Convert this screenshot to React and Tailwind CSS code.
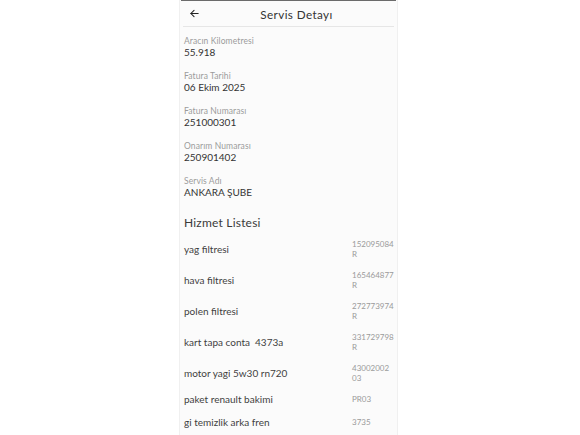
import React from "react";

const fields = [
  ["Aracın Kilometresi", "55.918"],
  ["Fatura Tarihi", "06 Ekim 2025"],
  ["Fatura Numarası", "251000301"],
  ["Onarım Numarası", "250901402"],
  ["Servis Adı", "ANKARA ŞUBE"],
];

const items = [
  ["yag filtresi", ["152095084", "R"], "h-[31px]"],
  ["hava filtresi", ["165464877", "R"], "h-[31px]"],
  ["polen filtresi", ["272773974", "R"], "h-[31px]"],
  ["kart tapa conta  4373a", ["331729798", "R"], "h-[31px]"],
  ["motor yagi 5w30 rn720", ["43002002", "03"], "h-[31px]"],
  ["paket renault bakimi", ["PR03"], "h-[22px]"],
  ["gi temizlik arka fren", ["3735"], "h-[24px]"],
];

export default function App() {
  return (
    <div className="w-[580px] h-[435px] bg-white overflow-hidden" style={{ fontFamily: "Lato, 'Open Sans', sans-serif" }}>
      <div className="ml-[179px] w-[219px] h-[435px] bg-[#fbfbfb] border-x border-[#f0f0f0] flex flex-col">
        <div className="h-[1px] mx-[1px] bg-[#6b6b6b]" />
        <div className="h-[25px] relative flex items-center justify-center pl-[16px]">
          <svg className="absolute left-[9px] top-[7px]" width="11" height="11" viewBox="0 0 24 24" fill="none" stroke="#222" strokeWidth="2.3" strokeLinecap="round" strokeLinejoin="round">
            <path d="M20 12H4" />
            <path d="M11 19l-7-7 7-7" />
          </svg>
          <span className="text-[11.7px] text-[#333] tracking-[0.4px] leading-none mt-[2px]">Servis Detayı</span>
        </div>
        <div className="h-px mx-[3px] bg-[#e6e6e6]" />
        <div className="pl-[4px] pr-[4px] pt-[9px]">
          {fields.map(([l, v]) => (
            <div key={l} className="h-[35px]">
              <div className="text-[8.5px] leading-[11px] text-[#9b9b9b] tracking-[0.1px]">{l}</div>
              <div className="text-[10px] leading-[11px] text-[#333]">{v}</div>
            </div>
          ))}
          <div className="mt-[4px] h-[18px] text-[12px] leading-[16px] text-[#3a3a3a] tracking-[0.2px]">Hizmet Listesi</div>
          {items.map(([name, code, h]) => (
            <div key={name} className={`${h} flex items-center`}>
              <div className="flex-1 text-[10px] leading-[12px] text-[#3f3f3f] whitespace-pre">{name}</div>
              <div className="w-[41px] text-[8px] leading-[10px] text-[#9a9a9a]">
                {code.map((c) => (
                  <div key={c}>{c}</div>
                ))}
              </div>
            </div>
          ))}
        </div>
      </div>
    </div>
  );
}
